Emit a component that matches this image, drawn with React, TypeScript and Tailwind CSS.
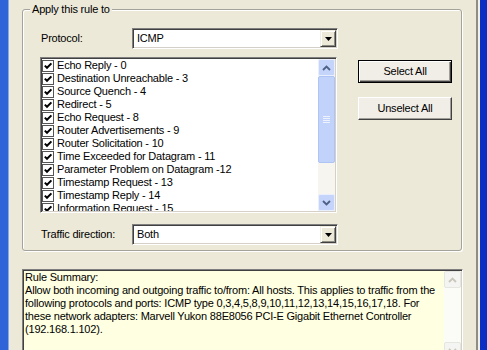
import React from "react";

// only the rows that fit in the list box are shown in the shot
const icmpTypes = [
  "Echo Reply - 0",
  "Destination Unreachable - 3",
  "Source Quench - 4",
  "Redirect - 5",
  "Echo Request - 8",
  "Router Advertisements - 9",
  "Router Solicitation - 10",
  "Time Exceeded for Datagram - 11",
  "Parameter Problem on Datagram -12",
  "Timestamp Request - 13",
  "Timestamp Reply - 14",
  "Information Request - 15",
];

const summaryLines = [
  "Rule Summary:",
  "Allow both incoming and outgoing traffic to/from: All hosts. This applies to traffic from the",
  "following protocols and ports: ICMP type 0,3,4,5,8,9,10,11,12,13,14,15,16,17,18. For",
  "these network adapters: Marvell Yukon 88E8056 PCI-E Gigabit Ethernet Controller",
  "(192.168.1.102).",
];

function Sunken({ className, children }: { className: string; children: React.ReactNode }) {
  return (
    <div
      className={
        "border border-t-[#7f7f7f] border-l-[#7f7f7f] border-r-white border-b-white shadow-[inset_1px_1px_0_#404040,inset_-1px_-1px_0_#d4d0c8] p-px " +
        className
      }
    >
      {children}
    </div>
  );
}

function Combo({ value }: { value: string }) {
  return (
    <Sunken className="w-[206px] h-[21px] bg-white">
      <div className="flex h-full items-center">
        <span className="flex-1 pl-[3px]">{value}</span>
        <div className="w-[16px] h-[17px] flex items-center justify-center bg-[#ece9d8] border border-t-[#f1efe2] border-l-[#f1efe2] border-r-[#404040] border-b-[#404040] shadow-[inset_1px_1px_0_#fff,inset_-1px_-1px_0_#8d8b82]">
          <svg width="7" height="4" viewBox="0 0 7 4">
            <path d="M0 0h7L3.5 4z" fill="#000" />
          </svg>
        </div>
      </div>
    </Sunken>
  );
}

function Check() {
  return (
    <div className="w-[12px] h-[12px] shrink-0 bg-white border border-[#555] flex items-center justify-center">
      <svg width="10" height="10" viewBox="0 0 10 10">
        <polyline points="1.8,4.6 4,6.8 8.4,2.4" fill="none" stroke="#000" strokeWidth="2" />
      </svg>
    </div>
  );
}

function Chevron({ up, color }: { up?: boolean; color: string }) {
  return (
    <svg width="9" height="6" viewBox="0 0 9 6">
      <polyline
        points={up ? "1,5 4.5,1.5 8,5" : "1,1 4.5,4.5 8,1"}
        fill="none"
        stroke={color}
        strokeWidth="1.8"
      />
    </svg>
  );
}

function ScrollBar() {
  return (
    <div className="w-[17px] h-full shrink-0 flex flex-col bg-[#f6f5f0]">
      <div className="h-[17px] rounded-[2px] bg-[#c4d4fa] border border-[#e9effd] flex items-center justify-center">
        <Chevron up color="#4d6185" />
      </div>
      <div className="h-[87px] rounded-[2px] bg-[#c1d2fb] border border-[#aec4f4] flex flex-col items-center justify-center gap-px">
        <div className="w-[7px] h-px bg-[#edf2fe]" />
        <div className="w-[7px] h-px bg-[#edf2fe]" />
        <div className="w-[7px] h-px bg-[#edf2fe]" />
        <div className="w-[7px] h-px bg-[#edf2fe]" />
      </div>
      <div className="flex-1" />
      <div className="h-[17px] rounded-[2px] bg-[#c4d4fa] border border-[#e9effd] flex items-center justify-center">
        <Chevron color="#4d6185" />
      </div>
    </div>
  );
}

function DisabledScrollBar() {
  return (
    <div className="w-[17px] h-full shrink-0 flex flex-col bg-[#fbfbf8]">
      <div className="h-[17px] rounded-[2px] bg-[#f4f4f2] border border-[#e6e6e0] flex items-center justify-center">
        <Chevron up color="#c9c7ba" />
      </div>
      <div className="flex-1" />
      <div className="h-[17px] rounded-[2px] bg-[#f4f4f2] border border-[#e6e6e0] flex items-center justify-center">
        <Chevron color="#c9c7ba" />
      </div>
    </div>
  );
}

function Button({ label, isDefault }: { label: string; isDefault?: boolean }) {
  return (
    <div
      className={
        "w-[94px] h-[23px] flex items-center justify-center bg-[#f0eee6] " +
        (isDefault
          ? "border border-black shadow-[inset_1px_1px_0_#fff,inset_-1px_-1px_0_#404040,inset_-2px_-2px_0_#a09e96]"
          : "border border-t-white border-l-white border-r-[#404040] border-b-[#404040] shadow-[inset_-1px_-1px_0_#a09e96]")
      }
    >
      {label}
    </div>
  );
}

export default function App() {
  return (
    <div className="w-[487px] h-[350px] overflow-hidden flex bg-[#ece9d8] text-black text-[11px] leading-[13px] tracking-[-0.2px] font-['Liberation_Sans',sans-serif]">
      <div className="w-[9px] h-full bg-[#2f64d8] border-r border-[#86a8ee]" />

      <div className="w-[467px] h-full flex flex-col">
        {/* Apply this rule to */}
        <div className="relative mt-[9px] ml-[13px] w-[440px] h-[242px] shrink-0 rounded-[3px] border border-[#a3a29b] shadow-[inset_1px_1px_0_#fff,1px_1px_0_#fff]">
          <span className="absolute left-[7px] top-[-7px] px-[2px] bg-[#ece9d8]">Apply this rule to</span>
          <div className="flex pt-[18px] pl-[17px]">
            <div className="w-[298px] flex flex-col">
              <div className="h-[21px] flex items-center">
                <span className="w-[92px] pl-px">Protocol:</span>
                <Combo value="ICMP" />
              </div>
              <Sunken className="mt-[8px] w-[297px] h-[156px] bg-white">
                <div className="flex h-full">
                  <div className="flex-1 min-w-0 overflow-hidden">
                    {icmpTypes.map((t) => (
                      <div key={t} className="h-[13px] flex items-center gap-[3px] whitespace-nowrap">
                        <Check />
                        <span>{t}</span>
                      </div>
                    ))}
                  </div>
                  <ScrollBar />
                </div>
              </Sunken>
              <div className="mt-[11px] h-[21px] flex items-center">
                <span className="w-[92px] pl-px">Traffic direction:</span>
                <Combo value="Both" />
              </div>
            </div>
            <div className="ml-[20px] pt-[32px] flex flex-col gap-[14px]">
              <Button label="Select All" isDefault />
              <Button label="Unselect All" />
            </div>
          </div>
        </div>

        {/* Rule summary */}
        <Sunken className="mt-[18px] ml-[13px] w-[441px] h-[92px] shrink-0 bg-[#ffffe1]">
          <div className="flex h-full">
            <div className="flex-1 min-w-0 overflow-hidden pl-px">
              {summaryLines.map((l) => (
                <div key={l} className="whitespace-nowrap">
                  {l}
                </div>
              ))}
            </div>
            <DisabledScrollBar />
          </div>
        </Sunken>
      </div>

      <div className="w-[2px] h-full bg-[#8f8d85]" />
      <div className="w-[2px] h-full bg-[#f2f1ea]" />
      <div className="w-[7px] h-full bg-[#0a2fc2]" />
    </div>
  );
}
